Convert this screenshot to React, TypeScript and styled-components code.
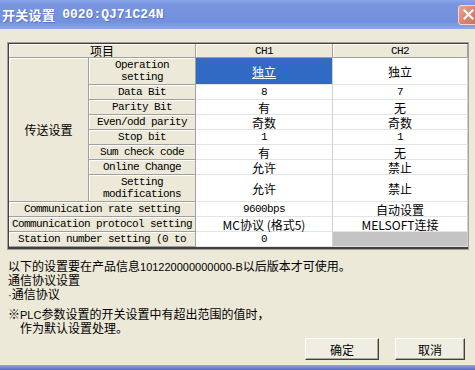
import styled, { createGlobalStyle } from 'styled-components';

const GlobalStyle = createGlobalStyle`
  html, body {
    margin: 0;
    padding: 0;
    background: #ece9d8;
  }
  body {
    width: 475px;
    height: 370px;
    overflow: hidden;
  }
`;

const cjk = `"Noto Sans CJK SC", "Noto Sans CJK JP", sans-serif`;
const mono = `"Liberation Mono", "Noto Sans CJK SC", monospace`;

const Window = styled.div`
  width: 475px;
  height: 370px;
  display: flex;
  flex-direction: column;
  background: #ece9d8;
  overflow: hidden;
`;

const TitleBar = styled.div`
  flex: none;
  height: 29px;
  display: flex;
  align-items: center;
  padding-left: 2px;
  background: linear-gradient(
    to bottom,
    #8aa6e7 0%,
    #7894de 15%,
    #7290dc 75%,
    #8ea9e8 100%
  );
  color: #fff;
  overflow: hidden;
`;

const TitleText = styled.span`
  font: bold 13px ${cjk};
  letter-spacing: 0.3px;
  text-shadow: 1px 1px 0 rgba(40, 60, 140, 0.35);
`;

const TitleCode = styled.span`
  font: bold 13px ${mono};
  margin-left: 7px;
  text-shadow: 1px 1px 0 rgba(40, 60, 140, 0.35);
`;

const CloseButton = styled.div`
  margin-left: auto;
  margin-right: -4px;
  width: 21px;
  height: 20px;
  box-sizing: border-box;
  border: 1px solid #f4d8d0;
  border-radius: 3px;
  background: linear-gradient(135deg, #e6a494 0%, #d9806c 60%, #cc6f5c 100%);
  display: flex;
  align-items: center;
  justify-content: center;
  color: #fff;
`;

const Body = styled.div`
  flex: 1;
  display: flex;
  flex-direction: column;
  padding: 13px 0 0 7px;
`;

const TableFrame = styled.div`
  width: 462px;
  box-sizing: border-box;
  border: 1px solid #a0a0a0;
`;

const Grid = styled.div`
  display: grid;
  grid-template-columns: 80px 107px 137px 135px;
  grid-template-rows: 14px 27px repeat(6, 15px) 27px repeat(3, 15px);
  border-left: 1px solid #404040;
  border-top: 1px solid #404040;
  border-bottom: 2px solid #404040;
  background: #fff;
`;

const Cell = styled.div<{ $cols?: number; $rows?: number }>`
  grid-column: span ${(p) => p.$cols ?? 1};
  grid-row: span ${(p) => p.$rows ?? 1};
  box-sizing: border-box;
  display: flex;
  align-items: center;
  justify-content: center;
  text-align: center;
  white-space: nowrap;
  color: #000;
`;

const LabelCell = styled(Cell)<{ $cjk?: boolean }>`
  background: #ece9d8;
  border-right: 1px solid #a0a0a0;
  border-bottom: 1px solid #a0a0a0;
  box-shadow: inset 1px 1px 0 #fff;
  font: ${(p) => (p.$cjk ? `12px/13px ${cjk}` : `11px/12px ${mono}`)};
  letter-spacing: ${(p) => (p.$cjk ? '0' : '-0.6px')};
`;

const DataCell = styled(Cell)<{
  $mono?: boolean;
  $selected?: boolean;
  $disabled?: boolean;
}>`
  background: ${(p) =>
    p.$selected ? '#316ac5' : p.$disabled ? '#c4c4c4' : '#fff'};
  color: ${(p) => (p.$selected ? '#fff' : '#000')};
  border-right: 1px solid #d4d0c8;
  border-bottom: 1px solid #e4e4e4;
  font: ${(p) => (p.$mono ? `11px/12px ${mono}` : `12px/13px ${cjk}`)};
  letter-spacing: ${(p) => (p.$mono ? '-0.6px' : '0')};
  text-decoration: ${(p) => (p.$selected ? 'underline' : 'none')};
  text-underline-offset: 1px;
`;

const Notes = styled.div`
  margin-top: 9px;
  padding-left: 1px;
  font: 12px/13.5px ${cjk};
  color: #000;
`;

const Para = styled.p`
  margin: 0 0 6px;
`;

const Indent = styled.span`
  display: block;
  padding-left: 12px;
`;

const Latin = styled.span`
  font: 11px "Liberation Sans", Arial, sans-serif;
`;

const ButtonRow = styled.div`
  display: flex;
  justify-content: flex-end;
  gap: 16px;
  padding-right: 10px;
  margin-top: -2px;
`;

const Button = styled.button<{ $w: number }>`
  width: ${(p) => p.$w}px;
  height: 22px;
  padding: 0;
  background: #f0eee2;
  border: 1px solid;
  border-color: #fff #404040 #404040 #fff;
  box-shadow: inset -1px -1px 0 #aca899;
  font: 12px ${cjk};
  color: #000;
`;

const BottomEdge = styled.div`
  flex: none;
  height: 5px;
  background: linear-gradient(to bottom, #97a3dc, #5a6bc2);
`;

type Row = {
  label: string[];
  ch1: string;
  ch2: string;
  mono1?: boolean;
  mono2?: boolean;
};

const transferRows: Row[] = [
  { label: ['Operation', 'setting'], ch1: '独立', ch2: '独立' },
  { label: ['Data Bit'], ch1: '8', ch2: '7', mono1: true, mono2: true },
  { label: ['Parity Bit'], ch1: '有', ch2: '无' },
  { label: ['Even/odd parity'], ch1: '奇数', ch2: '奇数' },
  { label: ['Stop bit'], ch1: '1', ch2: '1', mono1: true, mono2: true },
  { label: ['Sum check code'], ch1: '有', ch2: '无' },
  { label: ['Online Change'], ch1: '允许', ch2: '禁止' },
  { label: ['Setting', 'modifications'], ch1: '允许', ch2: '禁止' },
];

const renderLabel = (lines: string[]) =>
  lines.map((line, i) => (
    <span key={line}>
      {i > 0 && <br />}
      {line}
    </span>
  ));

export default function App() {
  return (
    <>
      <GlobalStyle />
      <Window>
        <TitleBar>
          <TitleText>开关设置</TitleText>
          <TitleCode>0020:QJ71C24N</TitleCode>
          <CloseButton>
            <svg width="11" height="11" viewBox="0 0 11 11">
              <path
                d="M1.5 1.5 L9.5 9.5 M9.5 1.5 L1.5 9.5"
                stroke="#fff"
                strokeWidth="2"
                strokeLinecap="square"
              />
            </svg>
          </CloseButton>
        </TitleBar>
        <Body>
          <TableFrame>
            <Grid>
              <LabelCell $cols={2} $cjk>
                项目
              </LabelCell>
              <LabelCell>CH1</LabelCell>
              <LabelCell>CH2</LabelCell>

              <LabelCell $rows={8} $cjk>
                传送设置
              </LabelCell>
              {transferRows.map((row, i) => (
                <Row key={row.label.join(' ')} row={row} selected={i === 0} />
              ))}

              <LabelCell $cols={2}>Communication rate setting</LabelCell>
              <DataCell $mono>9600bps</DataCell>
              <DataCell>自动设置</DataCell>

              <LabelCell $cols={2}>Communication protocol setting</LabelCell>
              <DataCell>MC协议 (格式5)</DataCell>
              <DataCell>MELSOFT连接</DataCell>

              <LabelCell $cols={2}>Station number setting (0 to</LabelCell>
              <DataCell $mono>0</DataCell>
              <DataCell $disabled />
            </Grid>
          </TableFrame>

          <Notes>
            <Para>
              以下的设置要在产品信息<Latin>101220000000000-B</Latin>
              以后版本才可使用。
              <br />
              通信协议设置
              <br />
              <Latin>·</Latin>通信协议
            </Para>
            <Para>
              ※<Latin>PLC</Latin>参数设置的开关设置中有超出范围的值时，
              <Indent>作为默认设置处理。</Indent>
            </Para>
          </Notes>

          <ButtonRow>
            <Button $w={74}>确定</Button>
            <Button $w={70}>取消</Button>
          </ButtonRow>
        </Body>
        <BottomEdge />
      </Window>
    </>
  );
}

function Row({ row, selected }: { row: Row; selected: boolean }) {
  return (
    <>
      <LabelCell>
        <div>{renderLabel(row.label)}</div>
      </LabelCell>
      <DataCell $mono={row.mono1} $selected={selected}>
        {row.ch1}
      </DataCell>
      <DataCell $mono={row.mono2}>{row.ch2}</DataCell>
    </>
  );
}
